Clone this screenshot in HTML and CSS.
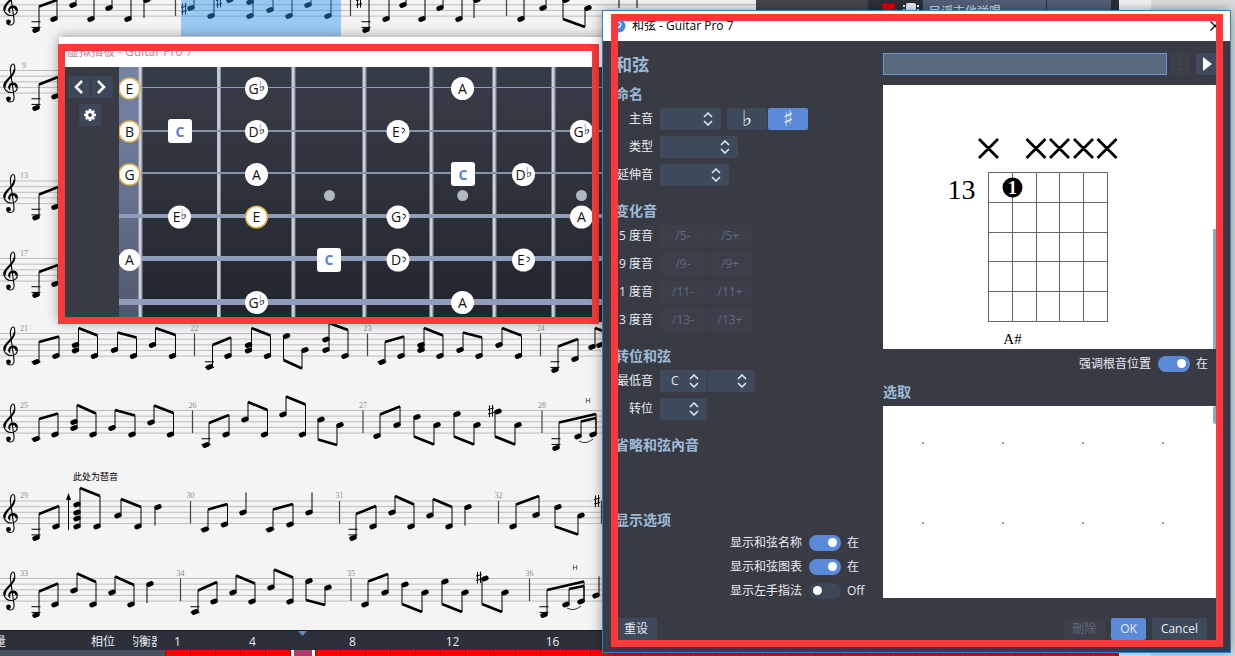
FILE: index.html
```html
<!DOCTYPE html>
<html lang="zh-CN">
<head>
  <meta charset="UTF-8">
  <meta name="viewport" content="width=device-width, initial-scale=1.0">
  <title>和弦 - Guitar Pro 7</title>
  <link rel="stylesheet" href="styles.css">
</head>
<body>
  <!-- Ventana principal -->
  <div class="app">
    <div class="workspace">
      <main class="sheet">
        <svg id="score" class="score" width="756" height="630" viewBox="0 0 756 630" role="img" aria-label="乐谱">
          <defs>
            <g id="clef">
              <path d="M10 19.5C7.800 16 9.800 12.600 12.800 12.600C16 12.600 17.300 15 17.300 17C17.300 20 14.500 22 11.500 22C7 22 3.800 19 3.800 14.800C3.800 9 14.800 6.500 14.800 -2C14.800 -5 14 -6.500 13 -6.500C11.500 -6.500 10 -3 10.500 1L14 26C14.600 30 12.500 31.500 10.500 31.500C8.500 31.500 7 30.500 7 29" fill="none" stroke="#000" stroke-width="1.1"/>
              <path d="M9.500 18C8.500 15 10.500 13.500 13 13.500C15 13.500 16.300 15 16.500 17M4.600 17C4 12 8 9 11 6C13 4 14.300 2 14.500 -1" fill="none" stroke="#000" stroke-width="2"/>
              <circle cx="8.500" cy="28.300" r="2.400"/>
            </g>
            <path id="sharp" d="M-1.500 -5.500V6M1.500 -6V5.500M-3 -1.500L3 -3M-3 3L3 1.500" fill="none" stroke="#000" stroke-width="1"/>
          </defs>
        </svg>
      </main>
      <aside class="inspector">
        <div class="track">
          <span class="track-color"></span>
          <svg class="track-icon" width="16" height="12" viewBox="0 0 16 12"><path d="M5 0h6q2 0 2 2v4q0 3-3 3H6q-3 0-3-3V2q0-2 2-2zM0 2h2v2H0zM14 2h2v2h-2zM0 6h2v2H0zM14 6h2v2h-2z" fill="#eef0f4"/></svg>
          <span class="track-name">民谣吉他弹唱</span>
          <span class="track-more">›</span>
        </div>
      </aside>
    </div>
    <footer class="mixer">
      <div class="mixer-labels">
        <span class="lbl-volume">音量</span>
        <span class="lbl-pan">相位</span>
        <span class="lbl-eq">均衡器</span>
      </div>
      <div class="timeline">
        <div class="bars">
          <span class="bar1">1</span>
          <span class="bar4">4</span>
          <span class="bar6"><svg width="9" height="5" viewBox="0 0 9 5"><path d="M0 0h9L4.500 5z" fill="#6288c8"/></svg></span>
          <span class="bar8">8</span>
          <span class="bar12">12</span>
          <span class="bar16">16</span>
        </div>
        <div class="clips"><span class="clip-current"></span></div>
      </div>
    </footer>
  </div>
  <div class="page-edge"></div>
  <div class="page-gutter"></div>

  <!-- Diapasón virtual -->
  <section class="window fret-window">
    <h2 class="fret-title">虚拟指板 - Guitar Pro 7</h2>
    <div class="fret-body">
      <div class="fret-tools">
        <div class="pair">
          <button type="button" class="tool" aria-label="上一个"><svg width="11" height="14" viewBox="0 0 11 14"><path d="M9 1L3 7l6 6" fill="none" stroke="#fff" stroke-width="2.500"/></svg></button>
          <button type="button" class="tool" aria-label="下一个"><svg width="11" height="14" viewBox="0 0 11 14"><path d="M2 1l6 6-6 6" fill="none" stroke="#fff" stroke-width="2.500"/></svg></button>
        </div>
        <button type="button" class="tool" aria-label="设置"><svg width="14" height="14" viewBox="-7 -7 14 14"><circle r="3.200" fill="none" stroke="#fff" stroke-width="2.600"/><path d="M0-6V-4M0 6V4M-6 0H-4M6 0H4M-4.100-4.100L-3-3M4.100 4.100L3 3M-4.100 4.100L-3 3M4.100-4.100L3-3" stroke="#fff" stroke-width="2.600"/></svg></button>
      </div>
      <svg class="fretboard" width="490" height="255" viewBox="119 67 490 255" role="img" aria-label="指板">
        <defs>
          <linearGradient id="wood" x1="0" y1="0" x2="0" y2="1"><stop offset="0" stop-color="#373d48"/><stop offset="1" stop-color="#22252d"/></linearGradient>
          <linearGradient id="nut" x1="0" y1="0" x2="0" y2="1"><stop offset="0" stop-color="#7584a5"/><stop offset=".5" stop-color="#67718e"/><stop offset="1" stop-color="#50566c"/></linearGradient>
          <path id="hook" d="M-1.500 -3Q2 -3 1.500 -.5Q1 1 -1 2" fill="none" stroke="#111" stroke-width="1"/>
        </defs>
        <rect x="119" y="67" width="490" height="255" fill="url(#wood)"/>
        <rect x="119" y="67" width="20" height="255" fill="url(#nut)"/>
        <g fill="#b0b8c2"><circle cx="329.500" cy="195.500" r="5.500"/><circle cx="462.700" cy="195.500" r="5.500"/><circle cx="581.500" cy="195.500" r="5.500"/></g>
        <path d="M140.500 67V322M219 67V322M293.500 67V322M364.500 67V322M431.500 67V322M494.500 67V322M553.500 67V322" stroke="#8f93a1" stroke-width="4"/>
        <path d="M140 67V322M218.500 67V322M293 67V322M364 67V322M431 67V322M494 67V322M553 67V322" stroke="#cdd0dc" stroke-width="2.500"/>
        <g stroke="#8f9cba">
          <path d="M142 87.500H609" stroke-width="1"/>
          <path d="M142 131H609M142 173H609" stroke-width="2" stroke="#8794a8"/>
          <path d="M119 216H609" stroke-width="4"/>
          <path d="M142 258.500H609" stroke-width="5"/>
          <path d="M119 302H609" stroke-width="6"/>
        </g>
        <g fill="#fff">
          <circle cx="256.500" cy="88.500" r="11.500"/><circle cx="462.500" cy="88.500" r="11.500"/>
          <circle cx="256.500" cy="131.500" r="11.500"/><circle cx="398" cy="131.500" r="11.500"/><circle cx="581.500" cy="131.500" r="11.500"/>
          <circle cx="256.500" cy="174.500" r="11.500"/><circle cx="523.500" cy="174.500" r="11.500"/>
          <circle cx="179.500" cy="217" r="11.500"/><circle cx="398" cy="217" r="11.500"/><circle cx="581.500" cy="217" r="11.500"/>
          <circle cx="129.500" cy="260" r="11"/><circle cx="398" cy="260" r="11.500"/><circle cx="523.500" cy="260" r="11.500"/>
          <circle cx="256.500" cy="302.500" r="11.500"/><circle cx="462.500" cy="302.500" r="11.500"/>
          <rect x="168" y="119" width="24" height="24" rx="3"/><rect x="451" y="162" width="24" height="24" rx="3"/><rect x="317" y="248" width="24" height="24" rx="3"/>
        </g>
        <g fill="#fff" stroke="#e2b44f" stroke-width="1.500">
          <circle cx="129.500" cy="88.500" r="10.500"/><circle cx="129.500" cy="131.500" r="10.500"/><circle cx="129.500" cy="174.500" r="10.500"/><circle cx="256.500" cy="217" r="10.800"/>
        </g>
        <g class="note-name">
          <text x="129.500" y="94">E</text><text x="129.500" y="137">B</text><text x="129.500" y="180">G</text><text x="129.500" y="265">A</text>
          <text x="257" y="94">G<tspan dy="-3">♭</tspan></text><text x="462.500" y="94">A</text>
          <text x="257" y="137">D<tspan dy="-3">♭</tspan></text><text x="396" y="137">E</text><text x="582" y="137">G<tspan dy="-3">♭</tspan></text>
          <text x="256.500" y="180">A</text><text x="524" y="180">D<tspan dy="-3">♭</tspan></text>
          <text x="180" y="222">E<tspan dy="-3">♭</tspan></text><text x="256.500" y="222">E</text><text x="396" y="222">G</text><text x="581.500" y="222">A</text>
          <text x="396" y="265">D</text><text x="521" y="265">E</text>
          <text x="257" y="308">G<tspan dy="-3">♭</tspan></text><text x="462.500" y="308">A</text>
        </g>
        <g class="note-root"><text x="180" y="137">C</text><text x="463" y="180">C</text><text x="329" y="265">C</text></g>
        <use href="#hook" x="403" y="131"/><use href="#hook" x="404" y="217"/><use href="#hook" x="404" y="260"/><use href="#hook" x="528" y="260"/>
      </svg>
    </div>
  </section>
  <div class="mark mark-fret"></div>

  <!-- Diálogo de acordes -->
  <section class="window chord-window">
    <header class="titlebar">
      <svg width="14" height="14" viewBox="0 0 14 14"><circle cx="7" cy="7" r="6.500" fill="#3f86ea"/><path d="M4 5q3-3 5 0q0 3-4 4" fill="none" stroke="#fff" stroke-width="1.200"/></svg>
      <span class="title-text">和弦 - Guitar Pro 7</span>
      <button type="button" class="close" aria-label="关闭"><svg width="10" height="10" viewBox="0 0 10 10"><path d="M.5.500l9 9M9.500.500l-9 9" stroke="#000" stroke-width="1.100"/></svg></button>
    </header>

    <form class="chord-form">
      <div class="settings">
        <h1>和弦</h1>

        <h2>命名</h2>
        <div class="rows">
          <div class="row">
            <label for="root">主音</label>
            <span class="picker w-root"><select id="root"><option></option></select><svg width="10" height="14" viewBox="0 0 10 14"><path d="M1 5l4-4 4 4M1 9l4 4 4-4"/></svg></span>
            <span class="pair accidental">
              <button type="button" class="btn">♭</button>
              <button type="button" class="btn active">♯</button>
            </span>
          </div>
          <div class="row">
            <label for="type">类型</label>
            <span class="picker w-type"><select id="type"><option></option></select><svg width="10" height="14" viewBox="0 0 10 14"><path d="M1 5l4-4 4 4M1 9l4 4 4-4"/></svg></span>
          </div>
          <div class="row">
            <label for="ext">延伸音</label>
            <span class="picker w-ext"><select id="ext"><option></option></select><svg width="10" height="14" viewBox="0 0 10 14"><path d="M1 5l4-4 4 4M1 9l4 4 4-4"/></svg></span>
          </div>
        </div>

        <h2>变化音</h2>
        <div class="rows">
          <div class="row"><span class="name">5 度音</span><span class="pair alter"><button type="button" class="btn" disabled>/5-</button><button type="button" class="btn" disabled>/5+</button></span></div>
          <div class="row"><span class="name">9 度音</span><span class="pair alter"><button type="button" class="btn" disabled>/9-</button><button type="button" class="btn" disabled>/9+</button></span></div>
          <div class="row"><span class="name">11 度音</span><span class="pair alter"><button type="button" class="btn" disabled>/11-</button><button type="button" class="btn" disabled>/11+</button></span></div>
          <div class="row"><span class="name">13 度音</span><span class="pair alter"><button type="button" class="btn" disabled>/13-</button><button type="button" class="btn" disabled>/13+</button></span></div>
        </div>

        <h2>转位和弦</h2>
        <div class="rows">
          <div class="row">
            <label for="bass">最低音</label>
            <span class="pair">
              <span class="picker w-bass"><select id="bass"><option>C</option></select><svg width="10" height="14" viewBox="0 0 10 14"><path d="M1 5l4-4 4 4M1 9l4 4 4-4"/></svg></span>
              <span class="picker w-bass"><select aria-label="最低音升降"><option></option></select><svg width="10" height="14" viewBox="0 0 10 14"><path d="M1 5l4-4 4 4M1 9l4 4 4-4"/></svg></span>
            </span>
          </div>
          <div class="row">
            <label for="inv">转位</label>
            <span class="picker w-bass"><select id="inv"><option></option></select><svg width="10" height="14" viewBox="0 0 10 14"><path d="M1 5l4-4 4 4M1 9l4 4 4-4"/></svg></span>
          </div>
        </div>

        <h2>省略和弦內音</h2>
        <div class="omitted"></div>

        <h2>显示选项</h2>
        <div class="rows options">
          <div class="switch"><label for="showName">显示和弦名称</label><input type="checkbox" id="showName" checked><span class="state">在</span></div>
          <div class="switch"><label for="showDiagram">显示和弦图表</label><input type="checkbox" id="showDiagram" checked><span class="state">在</span></div>
          <div class="switch"><label for="showFingers">显示左手指法</label><input type="checkbox" id="showFingers"><span class="state">Off</span></div>
        </div>
      </div>

      <div class="result">
        <div class="search">
          <input type="text" aria-label="和弦名称">
          <button type="button" class="btn more" aria-label="更多" disabled>⋮</button>
          <button type="button" class="btn play" aria-label="播放"><svg width="9" height="14" viewBox="0 0 9 14"><path d="M0 0l9 7-9 7z" fill="#fff"/></svg></button>
        </div>
        <div class="diagram">
          <svg width="333" height="264" viewBox="883 85 333 264" role="img" aria-label="和弦图">
            <path d="M979 139l19 19M998 139l-19 19M1026.500 139l19 19M1045.500 139l-19 19M1050 139l19 19M1069 139l-19 19M1074 139l19 19M1093 139l-19 19M1097.500 139l19 19M1116.500 139l-19 19" stroke="#000" stroke-width="2.800"/>
            <path d="M988.500 172V322M1012.500 172V322M1036.500 172V322M1059.500 172V322M1083.500 172V322M1107.500 172V322M988 172.500H1108M988 202.500H1108M988 232.500H1108M988 261.500H1108M988 291.500H1108M988 321.500H1108" stroke="#666" stroke-width="1"/>
            <circle cx="1012.500" cy="187.500" r="10"/>
            <text class="finger" x="1012.500" y="194">1</text>
            <text class="fret-number" x="961.500" y="199">13</text>
            <text class="bass-name" x="1012.500" y="344">A#</text>
          </svg>
          <span class="scroll"></span>
        </div>
        <div class="switch emphasis"><label for="emph">强调根音位置</label><input type="checkbox" id="emph" checked><span class="state">在</span></div>
        <h2>选取</h2>
        <div class="picks">
          <ul>
            <li></li><li></li><li></li><li></li>
            <li></li><li></li><li></li><li></li>
          </ul>
          <span class="scroll"></span>
        </div>
      </div>

      <div class="actions">
        <button type="reset" class="btn reset">重设</button>
        <button type="button" class="btn" disabled>刪除</button>
        <button type="submit" class="btn active">OK</button>
        <button type="button" class="btn">Cancel</button>
      </div>
    </form>
  </section>
  <div class="mark mark-chord"></div>

  <script src="score.js"></script>
</body>
</html>
```

FILE: styles.css
```css
/* RESET */
* {
  margin: 0;
  padding: 0;
  box-sizing: border-box;
}

body {
  position: relative;
  display: flex;
  height: 100vh;
  overflow: hidden;
  background-color: #dcdcdc;
  color: #e8ecf2;
  font: 12px/16px "Open Sans", "Noto Sans CJK SC", sans-serif;
}

button,
input,
select {
  font: inherit;
  color: inherit;
  border: none;
}

svg {
  display: block;
}

/* VENTANA PRINCIPAL */
.app {
  flex: 1;
  min-width: 0;
  display: flex;
  flex-direction: column;
}

.page-edge {
  width: 32px;
  background-color: #f6f6f6;
}

.page-gutter {
  width: 84px;
  background-color: #dedede;
}

.workspace {
  flex: 1;
  min-height: 0;
  display: flex;
}

.sheet {
  flex: 1;
  min-width: 0;
  overflow: hidden;
  background-color: #f4f4f4;
}

.bar-number {
  font: 8px "Liberation Serif", serif;
  fill: #8c8c8c;
}

.hammer {
  font: 7px "Liberation Sans", sans-serif;
  fill: #222;
}

.score-note {
  font: 9px "Noto Sans CJK SC", sans-serif;
  fill: #000;
}

.inspector {
  width: 363px;
  padding-left: 112px;
  background-color: #48464b;
}

.track {
  display: flex;
  align-items: flex-start;
  height: 100%;
  padding: 0 8px 0 14px;
  background-color: #2b303b;
}

.track-color {
  width: 13px;
  height: 14px;
  margin: 4px 8px 0 0;
  background-color: #e00000;
}

.track-icon {
  margin: 3px 4px 0 0;
}

.track-name,
.track-more {
  height: 22px;
  padding: 4px 6px;
  background-color: #536177;
}

.track-name {
  flex: 1;
  margin-right: 1px;
}

.track-more {
  width: 64px;
  text-align: center;
}

/* MEZCLADOR */
.mixer {
  display: flex;
  height: 26px;
  background-color: #2b303a;
  border-top: 1px solid #15181d;
}

.mixer-labels {
  display: grid;
  grid-template-columns: 1fr 24px 24px;
  column-gap: 18px;
  align-content: start;
  width: 165px;
  padding: 3px 8px 0 0;
  border-bottom: 6px solid #4a505c;
}

.mixer-labels span {
  display: flex;
  height: 16px;
  overflow: hidden;
  white-space: nowrap;
}

.mixer-labels .lbl-volume {
  justify-content: flex-end;
  width: 6px;
}

.mixer-labels .lbl-eq {
  justify-content: center;
}

.timeline {
  flex: 1;
  display: flex;
  flex-direction: column;
}

.bars {
  flex: 1;
  min-height: 0;
  display: grid;
  grid-template-columns: repeat(38, 25px);
  grid-template-rows: 100%;
  text-align: center;
  line-height: 22px;
}

.bars span { grid-row: 1; }
.bar1 { grid-column: 1; }
.bar4 { grid-column: 4; }
.bar6 { grid-column: 6; justify-self: center; }
.bar8 { grid-column: 8; }
.bar12 { grid-column: 12; }
.bar16 { grid-column: 16; }

.clips {
  height: 6px;
  padding-left: 126px;
  background: repeating-linear-gradient(to right, #a80000 0 1px, #fa0000 1px 25px);
}

.clip-current {
  display: block;
  width: 24px;
  height: 6px;
  background-color: #b23a66;
  border: solid #fff;
  border-width: 0 3px;
}

/* VENTANAS */
.window {
  position: absolute;
  box-shadow: 0 0 12px rgba(0, 0, 0, 0.4);
}

/* Recuadros rojos */
.mark {
  position: absolute;
  border: 7px solid #fb383a;
  pointer-events: none;
}

.mark-fret {
  top: 44px;
  left: 58px;
  width: 541px;
  height: 280px;
}

.mark-chord {
  top: 14px;
  right: 12px;
  bottom: 9px;
  left: 611px;
}

/* DIAPASÓN */
.fret-window {
  top: 37px;
  left: 59px;
  width: 550px;
  background-color: #fff;
}

.fret-title {
  height: 30px;
  padding-left: 8px;
  font-size: 12px;
  font-weight: normal;
  line-height: 30px;
  color: #999;
}

.fret-body {
  display: flex;
  overflow: hidden;
  background-color: #383b44;
}

.fret-tools {
  flex: none;
  width: 60px;
  padding: 9px 7px 0 9px;
  display: flex;
  flex-direction: column;
  align-items: center;
  gap: 6px;
}

.fretboard {
  flex: none;
}

.pair {
  display: flex;
  gap: 1px;
}

.tool {
  display: grid;
  place-items: center;
  width: 22px;
  height: 22px;
  border-radius: 2px;
  background-color: #3c4859;
}

.note-name,
.note-root {
  font: 14px "Open Sans", "DejaVu Sans", sans-serif;
  text-anchor: middle;
  fill: #111;
}

.note-root {
  font-weight: bold;
  fill: #5b82cf;
}

/* DIÁLOGO */
.chord-window {
  top: 10px;
  right: 4px;
  bottom: 3px;
  left: 602px;
  display: flex;
  flex-direction: column;
  border: 1px solid #2f80c8;
  background-color: #383b44;
}

.titlebar {
  display: flex;
  align-items: center;
  gap: 6px;
  height: 30px;
  padding: 0 10px 0 9px;
  background-color: #fff;
  color: #000;
}

.title-text {
  flex: 1;
}

.close {
  background: none;
}

.chord-form {
  flex: 1;
  display: grid;
  grid-template-columns: 268px 1fr;
  grid-template-rows: 1fr auto;
  padding: 12px 11px 12px 12px;
}

h1 {
  font-size: 17px;
  line-height: 24px;
  margin-bottom: 7px;
  color: #9dbad8;
}

.chord-form h2 {
  font-size: 14px;
  line-height: 20px;
  margin: 15px 0 4px;
  color: #9dbad8;
}

.settings h1 + h2 {
  margin-top: 7px;
}

.rows {
  display: flex;
  flex-direction: column;
  gap: 6px;
}

.row {
  display: flex;
  align-items: center;
  height: 22px;
}

.row label,
.row .name {
  display: flex;
  justify-content: flex-end;
  width: 38px;
  margin-right: 7px;
  white-space: nowrap;
}

/* Listas desplegables */
.picker {
  display: grid;
  align-items: center;
}

.picker select {
  grid-area: 1 / 1;
  width: 100%;
  height: 22px;
  padding-left: 11px;
  border-radius: 2px;
  background-color: #3e4a5b;
  appearance: none;
}

.picker svg {
  grid-area: 1 / 1;
  justify-self: end;
  margin-right: 8px;
  pointer-events: none;
  fill: none;
  stroke: #e8ecf2;
  stroke-width: 1.5;
}

.w-root { width: 61px; }
.w-type { width: 78px; }
.w-ext { width: 69px; }
.w-bass { width: 47px; }

/* Botones */
.btn {
  height: 22px;
  padding: 0 9px;
  border-radius: 2px;
  background-color: #3e4a5b;
}

.btn.active {
  background-color: #5a8ad8;
}

.btn:disabled {
  background-color: #3a3f4a;
  color: #626a7a;
}

.accidental {
  margin-left: 6px;
}

.accidental .btn {
  width: 40px;
  padding: 0;
  font: 22px/20px "DejaVu Sans", sans-serif;
}

.alter .btn {
  width: 46px;
  padding: 0;
}

.omitted {
  height: 36px;
}

/* Interruptores */
.switch {
  display: flex;
  align-items: center;
  height: 18px;
}

.options .switch {
  padding-left: 115px;
}

.switch input {
  width: 32px;
  height: 16px;
  margin: 0 6px 0 7px;
  padding: 3px 4px;
  border-radius: 8px;
  background-color: #3c4657;
  appearance: none;
}

.switch input::before {
  content: "";
  display: block;
  width: 9px;
  height: 9px;
  border-radius: 50%;
  background-color: #fff;
}

.switch input:checked {
  padding-left: 19px;
  background-color: #5a8ad8;
}

/* Resultado */
.search {
  display: flex;
  gap: 3px;
  margin-bottom: 10px;
}

.search input {
  flex: 1;
  min-width: 0;
  height: 22px;
  padding: 0 6px;
  border: 1px solid #6b97dc;
  background-color: #5b697f;
}

.search .more {
  width: 20px;
  padding: 0;
  color: #4a505e;
}

.search .play {
  display: grid;
  place-items: center;
  width: 23px;
  margin-left: 3px;
  padding: 0;
}

.diagram,
.picks {
  display: flex;
  justify-content: space-between;
  background-color: #fff;
}

.diagram {
  height: 264px;
  margin-bottom: 6px;
}

.diagram svg {
  margin-right: -6px;
}

.fret-number {
  font: 28px "Liberation Serif", serif;
  text-anchor: middle;
}

.finger {
  font: bold 18px "Liberation Serif", serif;
  text-anchor: middle;
  fill: #fff;
}

.bass-name {
  font: 15px "Liberation Serif", serif;
  text-anchor: middle;
}

.scroll {
  width: 6px;
  background-color: #94a6b6;
}

.diagram .scroll {
  height: 120px;
  align-self: flex-end;
}

.picks .scroll {
  height: 18px;
  border-radius: 3px;
}

.emphasis {
  justify-content: flex-end;
  padding-right: 11px;
}

.result h2 {
  margin: 9px 0 4px;
}

.picks {
  height: 192px;
}

.picks ul {
  display: grid;
  grid-template-columns: repeat(4, 80px);
  grid-auto-rows: 80px;
  list-style: none;
}

.picks li {
  padding: 36px 39px;
}

.picks li::before {
  content: "";
  display: block;
  width: 2px;
  height: 2px;
  background-color: #999;
}

.actions {
  grid-column: 1 / -1;
  display: flex;
  gap: 6px;
  padding-right: 12px;
}

.reset {
  margin-right: auto;
}
```

FILE: score.js
```js
var svg = document.getElementById('score');
var GAP = 5.65;

function add(name, attrs, text) {
  var el = document.createElementNS('http://www.w3.org/2000/svg', name);
  for (var key in attrs) el.setAttribute(key, attrs[key]);
  if (text) el.textContent = text;
  svg.appendChild(el);
}

// group: [x1, y1, beam1, x2, y2, beam2, ...extra heads on the first stem]
// single: [x, y, stemEnd]
var rows = [
  { top: -6.5, bars: [[175.5], [350.5], [506.5]], groups: [
    [36, 30, 6.5, 54, 19, 0], [73, 5, -9], [91, 19, -9], [109, 8, -9], [128, 19, -9],
    [147, 0, 18], [191, 8, -9], [211, 16, -9], [230, 0, -9], [250, 16, -9, 270, 10, -9, 2], [289, 16, -9],
    [308, 5, -9], [328, 16, -9], [366, 30, -9], [386, 19, -9], [403, 5, -9], [422, 19, -9], [440, 8, -9],
    [459, 19, -9], [477, 0, 18], [521, 19, -9], [543, 8, -9], [566, 0, 19, 588, 8, 27],
    [622, -8, 8], [640, -8, 8]
  ], sharps: [[184, 9], [219, 2], [359, 2]] },
  { top: 70.5, bars: [[24, 9, 1]], groups: [[36, 108, 84.5, 55, 96.5, 77]] },
  { top: 181, bars: [[24, 13, 1]], groups: [[36, 217.5, 194.5, 55, 207, 187]] },
  { top: 258.5, bars: [[24, 17, 1]], groups: [[36, 295, 272, 55, 284, 265]] },
  { top: 333.5, bars: [[24, 21, 1], [194.5, 22], [367.5, 23], [540.5, 24]], groups: [
    [36, 362, 342, 56, 356, 336.5], [75.5, 350.5, 328, 94.5, 356, 335.5, 345],
    [114.5, 350, 332.5, 133.5, 356, 337.5], [152.5, 345, 328, 172.5, 356, 335],
    [209.5, 367, 345, 228, 356, 337.5], [248.5, 350.5, 328, 267.5, 356, 335.5, 345],
    [286.5, 336, 360, 305, 350, 368.5], [326, 350, 323, 345, 356, 330, 339.5],
    [382, 362, 342, 401, 356, 336.5], [421, 350, 328, 440, 356, 335.5, 345],
    [460, 350, 332.5, 479, 356, 337.5], [499, 345, 328, 518.5, 356, 335.5],
    [555, 370, 346.5, 575, 359, 339], [592, 347, 328, 600, 345, 331]
  ] },
  { top: 410.5, bars: [[24, 25, 1], [192.5, 26], [363, 27], [542, 28]], groups: [
    [36, 439, 419, 55, 434.5, 413.5], [74, 428, 405, 93, 434.5, 413.5, 422],
    [112, 428, 410, 132, 434.5, 415.5], [151, 422.5, 405.5, 170.5, 434.5, 413],
    [206, 445, 423, 226, 434.5, 415], [245, 419.5, 402, 264.5, 434.5, 410],
    [283, 414.5, 396.5, 302.5, 434.5, 404.5], [321, 419.5, 439.5, 340, 425, 445],
    [377, 436, 414.5, 397, 425, 406.5], [417, 417, 436.5, 437, 425, 444.5],
    [457, 414, 436.5, 477, 425, 444.5], [498, 411.5, 436.5, 518, 425, 444.5],
    [556, 448, 422.5, 593, 434.5, 414], [578, 436.5, 421.5, 593, 434.5, 418]
  ], sharps: [[491, 411]], slurs: ['M579 441Q586 445 593 439'], hammers: [[588, 403]] },
  { top: 501, bars: [[24, 29, 1], [190.5, 30], [339.5, 31], [498.5, 32], [601.5]], groups: [
    [36, 538, 514, 56, 526.5, 506], [77, 526.5, 488, 97, 526.5, 496, 504.5, 512.5, 518.5],
    [118, 515.5, 499, 138, 526.5, 507], [158, 507, 525.5],
    [205, 529.5, 509.5, 224.5, 524.5, 504], [243, 512.5, 492.5],
    [270, 529.5, 509.5, 290, 524.5, 504], [309, 512.5, 492.5],
    [353, 538, 514, 373, 526.5, 506], [392, 512.5, 496, 411, 526.5, 504.5],
    [430, 515.5, 499, 449, 526.5, 507], [468, 507, 525.5],
    [513, 526.5, 504.5, 536, 515, 496], [558, 507, 526.5, 581, 515.5, 534.5]
  ], sharps: [[597, 501]] },
  { top: 578.5, bars: [[24, 33, 1], [180.5, 34], [351, 35], [529.5, 36]], groups: [
    [36, 615, 591.5, 55, 604.5, 583.5], [74, 590.5, 573.5, 93, 604.5, 582],
    [112, 592.5, 576.5, 131, 604.5, 585], [150, 584, 603],
    [195, 612, 590.5, 214, 601.5, 582], [233, 592.5, 575.5, 252, 601.5, 583.5],
    [271, 587.5, 569.5, 290, 601.5, 577.5], [309, 581, 600, 328, 587.5, 605],
    [365, 604.5, 581.5, 385, 592.5, 574], [405, 584.5, 604, 425, 592.5, 612],
    [445, 581.5, 604, 465, 592.5, 612], [485, 578.5, 604, 505, 592.5, 612],
    [544, 615, 590, 581, 601.5, 581.5], [566, 604.5, 589, 581, 601.5, 586], [596, 595.5, 576.5]
  ], sharps: [[479, 577.5]], slurs: ['M567 608Q574 612 581 606'], hammers: [[575, 570]] }
];

rows.forEach(function (row) {
  var bottom = row.top + GAP * 4;
  var lines = '', stems = '', beams = '', heads = '', ledgers = '';
  for (var i = 0; i < 5; i++) lines += 'M0 ' + (row.top + GAP * i) + 'H756';
  add('path', { d: lines, stroke: '#bdbdbd', 'stroke-width': 1 });
  add('use', { href: '#clef', y: row.top });

  function head(x, y) {
    heads += 'M' + (x - 1.3) + ' ' + (y + 0.5) + 'l2.6 -1';
    for (var ly = bottom + GAP; ly < y + 2; ly += GAP) ledgers += 'M' + (x - 4.5) + ' ' + ly + 'h9';
  }
  function stem(x, y, end) {
    var sx = x + (end < y ? 3 : -3);
    stems += 'M' + sx + ' ' + y + 'V' + end;
    return sx;
  }

  row.groups.forEach(function (g) {
    head(g[0], g[1]);
    var sx = stem(g[0], g[1], g[2]);
    if (g.length > 3) {
      head(g[3], g[4]);
      beams += 'M' + sx + ' ' + g[2] + 'L' + stem(g[3], g[4], g[5]) + ' ' + g[5];
      g.slice(6).forEach(function (y) { head(g[0], y); });
    }
  });
  add('path', { d: ledgers + stems, stroke: '#000', 'stroke-width': 1 });
  add('path', { d: beams, stroke: '#000', 'stroke-width': 2.6 });
  add('path', { d: heads, stroke: '#000', 'stroke-width': 4.8, 'stroke-linecap': 'round' });

  // third value marks the first bar of a line, which has no bar line
  row.bars.forEach(function (b) {
    if (!b[2]) add('path', { d: 'M' + b[0] + ' ' + row.top + 'V' + bottom, stroke: '#444', 'stroke-width': 1.2 });
    if (b[1]) add('text', { x: b[0], y: row.top - 3, 'class': 'bar-number', 'text-anchor': 'middle' }, String(b[1]));
  });
  (row.sharps || []).forEach(function (s) { add('use', { href: '#sharp', x: s[0], y: s[1] }); });
  (row.slurs || []).forEach(function (d) { add('path', { d: d, fill: 'none', stroke: '#333' }); });
  (row.hammers || []).forEach(function (h) { add('text', { x: h[0], y: h[1], 'class': 'hammer', 'text-anchor': 'middle' }, 'H'); });
});

// arpeggio arrow and its remark
add('path', { d: 'M68.500 530V498', stroke: '#000', 'stroke-width': 1 });
add('path', { d: 'M66 500l2.500 -7 2.500 7z' });
add('text', { x: 73, y: 480, 'class': 'score-note' }, '此处为琶音');

// selected bar
add('rect', { x: 181, y: 0, width: 160, height: 36, fill: '#2d96f0', 'fill-opacity': 0.45 });
```
